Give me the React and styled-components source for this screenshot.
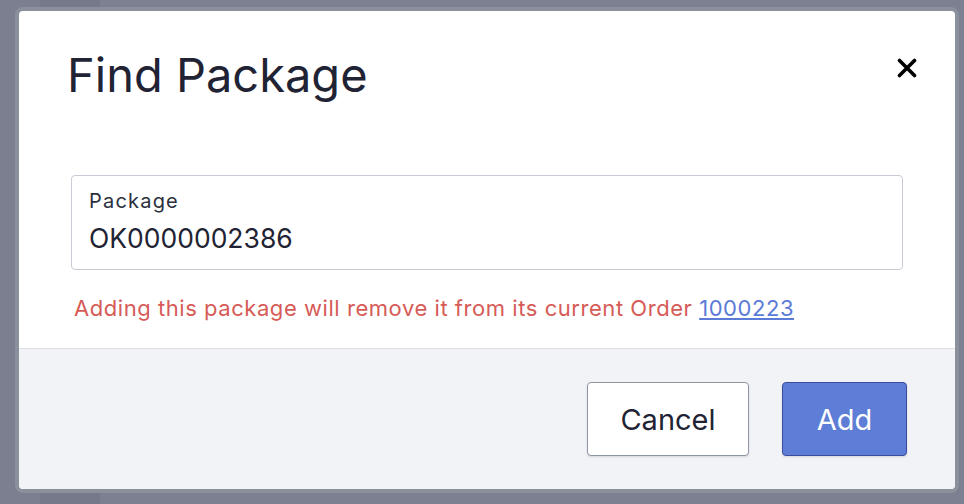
import React from 'react'
import styled, { createGlobalStyle } from 'styled-components'

const GlobalStyle = createGlobalStyle`
  html, body {
    margin: 0;
    padding: 0;
    background: #787c8c;
    font-family: Inter, "Noto Sans", "Liberation Sans", sans-serif;
  }
`;

const App = () => {
  return (
    <>
      <GlobalStyle />
      <Backdrop>
        <Modal>
          <Header>
            <Title>Find Package</Title>
            <Close aria-label="Close">
              <svg width="20" height="20" viewBox="0 0 20 20">
                <path d="M2.5 2.5 L17.5 17.5 M17.5 2.5 L2.5 17.5" stroke="#000" strokeWidth="3.6" strokeLinecap="round" />
              </svg>
            </Close>
          </Header>
          <Body>
            <Field>
              <Label>Package</Label>
              <Value>OK0000002386</Value>
            </Field>
            <Warning>
              Adding this package will remove it from its current Order <OrderLink href="#">1000223</OrderLink>
            </Warning>
          </Body>
          <Footer>
            <Button>Cancel</Button>
            <Button primary>Add</Button>
          </Footer>
        </Modal>
      </Backdrop>
    </>
  )
}

export default App

const Backdrop = styled.div`
  width: 964px;
  height: 504px;
  box-sizing: border-box;
  padding: 7px 0 0 15px;
  background: linear-gradient(90deg, #7b7f8f 0, #7b7f8f 40px, #75798a 40px, #75798a 100px, #7c8090 100px);
`;

const Modal = styled.div`
  width: 944px;
  height: 486px;
  box-sizing: border-box;
  border: 4px solid #8b909d;
  border-radius: 8px;
  background: #fff;
  display: flex;
  flex-direction: column;
  overflow: hidden;
`;

const Header = styled.div`
  display: flex;
  justify-content: space-between;
  align-items: flex-start;
  padding: 36px 38px 0 48px;
`;

const Title = styled.h2`
  margin: 0;
  font-size: 47px;
  line-height: 56px;
  font-weight: 400;
  color: #1f2333;
`;

const Close = styled.button`
  border: none;
  background: none;
  padding: 0;
  margin-top: 11px;
  width: 20px;
  height: 20px;
  display: flex;
  cursor: pointer;
`;

const Body = styled.div`
  padding: 72px 52px 0 52px;
  flex: 1;
`;

const Field = styled.div`
  height: 95px;
  box-sizing: border-box;
  border: 1.5px solid #c9ccd4;
  border-radius: 4px;
  padding: 11px 17px 0 17px;
`;

const Label = styled.div`
  font-size: 20px;
  line-height: 28px;
  letter-spacing: 1.2px;
  color: #2b2f3d;
`;

const Value = styled.div`
  margin-top: 7px;
  font-size: 26.5px;
  line-height: 32px;
  color: #1f2333;
`;

const Warning = styled.div`
  margin-top: 25px;
  padding-left: 3px;
  font-size: 22px;
  line-height: 26px;
  letter-spacing: 0.55px;
  color: #d65b57;
`;

const OrderLink = styled.a`
  color: #5b7bd6;
  text-decoration: underline;
`;

const Footer = styled.div`
  height: 141px;
  border-top: 1px solid #dcdee4;
  background: #f2f3f7;
  display: flex;
  justify-content: flex-end;
  align-items: center;
  gap: 33px;
  padding: 0 48px;
  box-sizing: border-box;
`;

const Button = styled.button`
  height: 74px;
  width: ${p => (p.primary ? '125px' : '162px')};
  padding: 0;
  font-family: inherit;
  font-size: 29px;
  border-radius: 4px;
  border: 1.5px solid ${p => (p.primary ? '#3c4d9e' : '#8f96a3')};
  background: ${p => (p.primary ? '#5d7dd6' : '#fff')};
  color: ${p => (p.primary ? '#fff' : '#1f2333')};
  box-shadow: 0 1px 2px rgba(0, 0, 0, 0.12);
  cursor: pointer;
`;
